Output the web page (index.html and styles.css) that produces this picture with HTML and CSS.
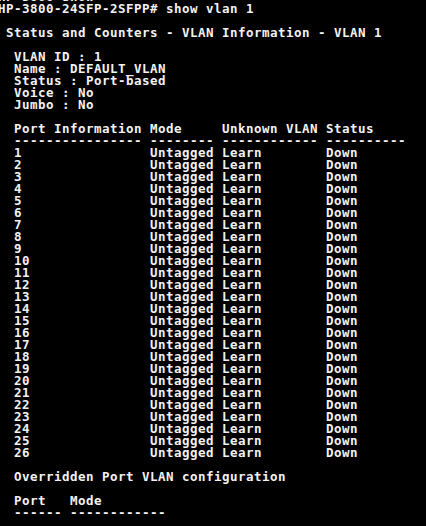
FILE: index.html
```html
<!DOCTYPE html>
<html>
<head>
<meta charset="utf-8">
<link rel="stylesheet" href="styles.css">
</head>
<body>
<pre class="term">HP-3800 show
HP-3800-24SFP-2SFPP# show vlan 1

 Status and Counters - VLAN Information - VLAN 1

  VLAN ID : 1
  Name : DEFAULT_VLAN
  Status : Port-based
  Voice : No
  Jumbo : No

  Port Information Mode     Unknown VLAN Status
  ---------------- -------- ------------ ----------
  1                Untagged Learn        Down
  2                Untagged Learn        Down
  3                Untagged Learn        Down
  4                Untagged Learn        Down
  5                Untagged Learn        Down
  6                Untagged Learn        Down
  7                Untagged Learn        Down
  8                Untagged Learn        Down
  9                Untagged Learn        Down
  10               Untagged Learn        Down
  11               Untagged Learn        Down
  12               Untagged Learn        Down
  13               Untagged Learn        Down
  14               Untagged Learn        Down
  15               Untagged Learn        Down
  16               Untagged Learn        Down
  17               Untagged Learn        Down
  18               Untagged Learn        Down
  19               Untagged Learn        Down
  20               Untagged Learn        Down
  21               Untagged Learn        Down
  22               Untagged Learn        Down
  23               Untagged Learn        Down
  24               Untagged Learn        Down
  25               Untagged Learn        Down
  26               Untagged Learn        Down

  Overridden Port VLAN configuration

  Port   Mode
  ------ ------------
</pre>
</body>
</html>
```

FILE: styles.css
```css
html, body {
  margin: 0;
  padding: 0;
  background: #000;
  overflow: hidden;
  width: 426px;
  height: 526px;
}

.term {
  margin: -9px 0 0 -2px;
  padding: 0;
  color: #f2f2f2;
  font-family: "DejaVu Sans Mono", monospace;
  font-weight: bold;
  font-size: 12.5px;
  line-height: 12px;
  letter-spacing: 0.475px;
  white-space: pre;
}
```
